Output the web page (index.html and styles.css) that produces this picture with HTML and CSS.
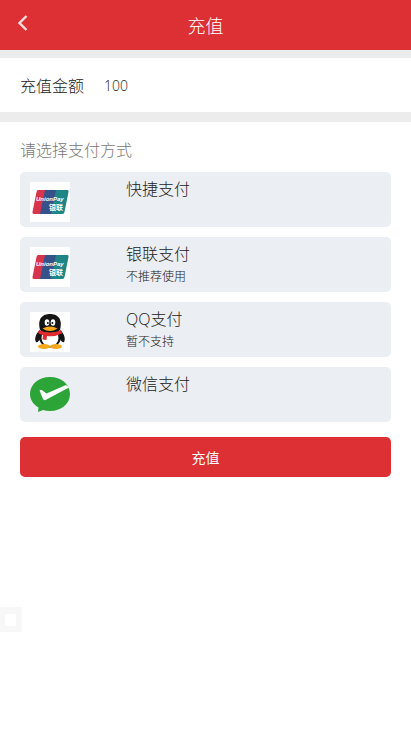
FILE: index.html
```html
<!DOCTYPE html>
<html lang="zh-CN">
<head>
  <meta charset="UTF-8">
  <meta name="viewport" content="width=device-width, initial-scale=1.0">
  <title>充值</title>
  <link rel="stylesheet" href="styles.css">
</head>
<body>
  <!-- UnionPay logo, used by two rows -->
  <svg class="symbols" width="0" height="0" aria-hidden="true">
    <symbol id="unionpay" viewBox="0 0 40 40">
      <rect width="40" height="40" fill="#fff"/>
      <path d="M8 8h8l-5 24H4q-2 0-1.500-2L6.500 10Q7 8 8 8z" fill="#d8344c"/>
      <path d="M15 8h12l-5 24H10z" fill="#35538a"/>
      <path d="M26 8h11.500q1.500 0 1 2L34.500 30q-.5 2-2 2H21z" fill="#1f8585"/>
      <text x="6" y="19" class="logo-en">UnionPay</text>
      <text x="19" y="28" class="logo-cn">银联</text>
    </symbol>
  </svg>

  <header class="header">
    <a href="#" class="back" aria-label="返回">
      <svg width="10" height="16" viewBox="0 0 10 16">
        <path d="M8.500 1L1.500 8l7 7" fill="none" stroke="#f9dcdd" stroke-width="2.400"/>
      </svg>
    </a>
    <h1>充值</h1>
  </header>

  <div class="amount">
    <label for="money">充值金额</label>
    <input type="text" id="money" value="100">
  </div>

  <main class="content">
    <h2>请选择支付方式</h2>
    <div class="pay-list">
      <button type="button" class="pay-item">
        <svg class="pay-icon" aria-hidden="true"><use href="#unionpay"/></svg>
        <span class="pay-text">
          <span class="pay-name">快捷支付</span>
        </span>
      </button>
      <button type="button" class="pay-item">
        <svg class="pay-icon" aria-hidden="true"><use href="#unionpay"/></svg>
        <span class="pay-text">
          <span class="pay-name">银联支付</span>
          <span class="pay-note">不推荐使用</span>
        </span>
      </button>
      <button type="button" class="pay-item">
        <svg class="pay-icon" viewBox="0 0 40 40" aria-hidden="true">
          <rect width="40" height="40" fill="#fff"/>
          <path d="M10 18C6 21 4 27 6 30c1 1 3-1 4-3zM30 18c4 3 6 9 4 12-1 1-3-1-4-3z" fill="#151515"/>
          <ellipse cx="20" cy="25" rx="11" ry="10.500" fill="#151515"/>
          <ellipse cx="20" cy="26" rx="8.500" ry="8.500" fill="#fff"/>
          <ellipse cx="14" cy="34.500" rx="6" ry="2.500" fill="#f5a81c"/>
          <ellipse cx="26" cy="34.500" rx="6" ry="2.500" fill="#f5a81c"/>
          <path d="M10 18C7 6 13 2 20 2s13 4 10 16c-4 4-16 4-20 0z" fill="#151515"/>
          <ellipse cx="17" cy="10.500" rx="2.300" ry="3.200" fill="#fff"/>
          <ellipse cx="23" cy="10.500" rx="2.300" ry="3.200" fill="#fff"/>
          <circle cx="17.800" cy="11" r="1" fill="#151515"/>
          <circle cx="22.400" cy="11" r="1" fill="#151515"/>
          <path d="M12.500 16.500q7.500-4 15 0-7.500 5-15 0z" fill="#f5a81c"/>
          <path d="M9 18q11 5 22 0l1 3.500q-7 3.500-15 2.500l-.5 4-4-.5.500-4.500q-3-.5-5-2z" fill="#e02a2d"/>
        </svg>
        <span class="pay-text">
          <span class="pay-name">QQ支付</span>
          <span class="pay-note">暂不支持</span>
        </span>
      </button>
      <button type="button" class="pay-item">
        <svg class="pay-icon" viewBox="0 0 40 40" aria-hidden="true">
          <path d="M20 0c11 0 20 7 20 17s-9 17-20 17q-4 0-7-1l-5 2 .5-4.500C3 27 0 22.500 0 17 0 7 9 0 20 0z" fill="#2ca438"/>
          <path d="M9.500 13.500q1.500-1.500 3 0l4 3L36 8l3 2.500L15.500 23q-2 .5-2.500-1z" fill="#fff"/>
        </svg>
        <span class="pay-text">
          <span class="pay-name">微信支付</span>
        </span>
      </button>
    </div>
    <button type="submit" class="submit">充值</button>
  </main>

  <div class="float-box"></div>
</body>
</html>
```
FILE: styles.css
```css
* {
  margin: 0;
  padding: 0;
  box-sizing: border-box;
}

body {
  min-height: 100vh;
  display: flex;
  flex-direction: column;
  font-family: "Open Sans", "Noto Sans CJK SC", sans-serif;
  font-weight: 300;
  font-size: 16px;
  color: #222;
  background-color: #ececec;
}

button,
input {
  font: inherit;
  color: inherit;
  border: none;
}

.symbols {
  position: absolute;
}

.header {
  display: grid;
  grid-template-columns: 50px 1fr 50px;
  align-items: center;
  height: 50px;
  color: #fff;
  background-color: #dc3035;
}

.header h1 {
  font-size: 18px;
  font-weight: 300;
  text-align: center;
}

.back {
  display: flex;
  padding: 0 18px 4px;
}

.amount {
  display: flex;
  align-items: center;
  gap: 20px;
  height: 54px;
  margin: 8px 0 10px;
  padding: 0 20px;
  background-color: #fff;
}

.amount input {
  flex: 1;
  min-width: 0;
  font-size: 14px;
  outline: none;
  background: none;
}

.content {
  flex: 1;
  padding: 16px 20px;
  background-color: #fff;
}

.content h2 {
  margin-bottom: 10px;
  font-size: 16px;
  line-height: 24px;
  font-weight: 300;
  color: #777;
}

.pay-list {
  display: flex;
  flex-direction: column;
  gap: 10px;
}

.pay-item {
  display: flex;
  align-items: flex-start;
  width: 100%;
  height: 55px;
  padding: 0 10px;
  text-align: left;
  border-radius: 5px;
  background-color: #ebeef3;
  cursor: pointer;
}

.pay-icon {
  width: 40px;
  height: 40px;
  margin: 10px 56px 0 0;
}

.pay-text {
  display: flex;
  flex-direction: column;
  padding-top: 5px;
}

.pay-name {
  line-height: 24px;
}

.pay-note {
  font-size: 12px;
  line-height: 22px;
}

.logo-en {
  font: italic bold 6px "Liberation Sans", sans-serif;
  fill: #fff;
}

.logo-cn {
  font: bold 7px "Noto Sans CJK SC", sans-serif;
  fill: #fff;
}

.submit {
  width: 100%;
  height: 40px;
  margin-top: 15px;
  font-size: 14px;
  font-weight: 400;
  color: #fff;
  border-radius: 5px;
  background-color: #dc3035;
  cursor: pointer;
}

/* Floating handle at the left edge */
.float-box {
  position: fixed;
  left: 0;
  bottom: 99px;
  width: 22px;
  height: 25px;
  border: 6px solid #f7f7f7;
  border-width: 7px 6px 6px 5px;
  background-color: #fff;
}
```
